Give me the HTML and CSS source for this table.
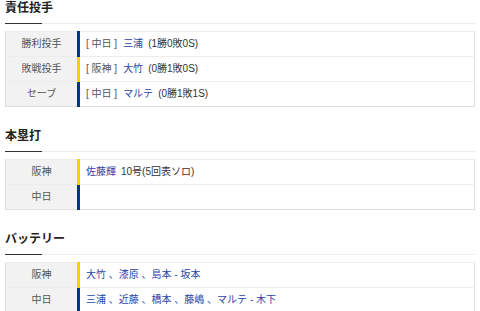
FILE: index.html
```html
<!DOCTYPE html>
<html lang="ja">
<head>
<meta charset="utf-8">
<link rel="stylesheet" href="styles.css">
</head>
<body>
<section class="sec sec-first">
  <h2 class="sec-title">責任投手</h2>
  <table class="info">
    <tr><th>勝利投手</th><td class="d"><span class="team">[ 中日 ]</span><a class="pl">三浦</a><span class="rec">(1勝0敗0S)</span></td></tr>
    <tr><th>敗戦投手</th><td class="t"><span class="team">[ 阪神 ]</span><a class="pl">大竹</a><span class="rec">(0勝1敗0S)</span></td></tr>
    <tr><th>セーブ</th><td class="d"><span class="team">[ 中日 ]</span><a class="pl">マルテ</a><span class="rec">(0勝1敗1S)</span></td></tr>
  </table>
</section>
<section class="sec">
  <h2 class="sec-title">本塁打</h2>
  <table class="info">
    <tr><th>阪神</th><td class="t"><a class="pl">佐藤輝</a><span class="rec">10号(5回表ソロ)</span></td></tr>
    <tr><th>中日</th><td class="d"></td></tr>
  </table>
</section>
<section class="sec">
  <h2 class="sec-title">バッテリー</h2>
  <table class="info">
    <tr><th>阪神</th><td class="t"><span class="bat">大竹 、漆原 、島本 - 坂本</span></td></tr>
    <tr><th>中日</th><td class="d"><span class="bat">三浦 、近藤 、橋本 、藤嶋 、マルテ - 木下</span></td></tr>
  </table>
</section>
</body>
</html>
```

FILE: styles.css
```css
html, body {
  margin: 0;
  padding: 0;
  background: #fff;
}
body {
  padding: 0 5px;
  font-family: "Liberation Sans", "Noto Sans CJK JP", sans-serif;
  color: #333;
}
.sec {
  margin-top: 21px;
}
.sec-first {
  margin-top: 0;
}
.sec-title {
  position: relative;
  margin: 0;
  font-size: 12px;
  line-height: 16px;
  font-weight: bold;
  color: #222;
  padding-bottom: 7px;
  border-bottom: 1px solid #ececec;
}
.sec-title::after {
  content: "";
  position: absolute;
  left: 0;
  bottom: -1px;
  width: 37px;
  height: 1px;
  background: #333;
}
.info {
  margin-top: 7px;
  width: 100%;
  border-collapse: collapse;
  border: 1px solid #dedede;
  font-size: 10px;
}
.info th,
.info td {
  height: 24px;
  padding: 0;
  border-top: 1px solid #ececec;
  line-height: 14px;
}
.info th {
  width: 71px;
  background: #f2f2f2;
  color: #555;
  font-weight: normal;
  text-align: center;
}
.info td {
  background: #fff;
  padding-left: 6px;
  text-align: left;
  border-left: 3px solid #00367a;
}
.info td.t {
  border-left-color: #f5d100;
}
.team {
  color: #555;
  margin-right: 6px;
}
.pl {
  color: #2845a8;
  text-decoration: none;
  margin-right: 5px;
}
.rec {
  color: #333;
}
.bat {
  color: #2845a8;
}
```
